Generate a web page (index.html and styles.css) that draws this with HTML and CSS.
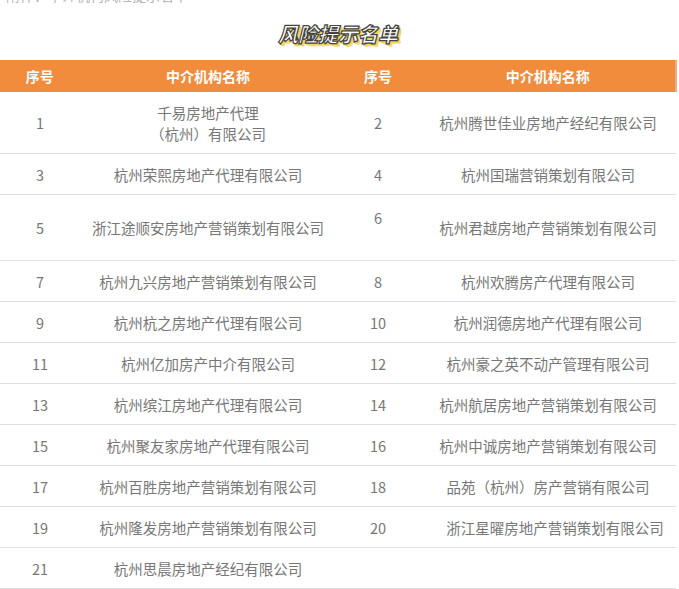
FILE: index.html
```html
<!DOCTYPE html>
<html lang="zh">
<head>
<meta charset="utf-8">
<link rel="stylesheet" href="styles.css">
</head>
<body>
<div class="page">
  <div class="cut"><span class="cut-text">附件：中介机构风险提示名单</span></div>
  <h1 class="title">风险提示名单</h1>
  <table class="list">
    <colgroup>
      <col class="c-no"><col class="c-name"><col class="c-no2"><col class="c-name2">
    </colgroup>
    <thead>
      <tr><th>序号</th><th>中介机构名称</th><th>序号</th><th>中介机构名称</th></tr>
    </thead>
    <tbody>
      <tr class="r61"><td>1</td><td>千易房地产代理<br>（杭州）有限公司</td><td>2</td><td>杭州腾世佳业房地产经纪有限公司</td></tr>
      <tr><td>3</td><td>杭州荣熙房地产代理有限公司</td><td>4</td><td>杭州国瑞营销策划有限公司</td></tr>
      <tr class="r66"><td>5</td><td>浙江途顺安房地产营销策划有限公司</td><td class="up">6<br>&nbsp;</td><td>杭州君越房地产营销策划有限公司</td></tr>
      <tr><td>7</td><td>杭州九兴房地产营销策划有限公司</td><td>8</td><td>杭州欢腾房产代理有限公司</td></tr>
      <tr><td>9</td><td>杭州杭之房地产代理有限公司</td><td>10</td><td>杭州润德房地产代理有限公司</td></tr>
      <tr><td>11</td><td>杭州亿加房产中介有限公司</td><td>12</td><td>杭州豪之英不动产管理有限公司</td></tr>
      <tr><td>13</td><td>杭州缤江房地产代理有限公司</td><td>14</td><td>杭州航居房地产营销策划有限公司</td></tr>
      <tr><td>15</td><td>杭州聚友家房地产代理有限公司</td><td>16</td><td>杭州中诚房地产营销策划有限公司</td></tr>
      <tr><td>17</td><td>杭州百胜房地产营销策划有限公司</td><td>18</td><td>品苑（杭州）房产营销有限公司</td></tr>
      <tr><td>19</td><td>杭州隆发房地产营销策划有限公司</td><td>20</td><td class="wide">浙江星曜房地产营销策划有限公司</td></tr>
      <tr><td>21</td><td>杭州思晨房地产经纪有限公司</td><td></td><td></td></tr>
    </tbody>
  </table>
</div>
</body>
</html>
```
FILE: styles.css
```css
html, body {
  margin: 0;
  padding: 0;
  background: #fff;
}
body {
  font-family: "Microsoft YaHei", "Noto Sans CJK SC", sans-serif;
  color: #666;
  overflow: hidden;
}
.page {
  width: 679px;
}
.cut {
  height: 5px;
  overflow: hidden;
  padding-left: 6px;
}
.cut-text {
  display: block;
  margin-top: -13px;
  font-size: 14px;
  line-height: 16px;
  color: #b5b5b5;
}
.title {
  margin: 0;
  height: 55px;
  line-height: 58px;
  text-align: center;
  padding-right: 3px;
  font-size: 20px;
  font-weight: 900;
  font-style: italic;
  color: #fff;
  -webkit-text-stroke: 1.2px #444;
  text-shadow: 2px 2px 0 #f2d25a, 1px 2px 0 #f2d25a, 2px 1px 0 #e8c23a, 3px 3px 0 #f5e08a;
}
.list {
  width: 676px;
  border-collapse: collapse;
  table-layout: fixed;
}
.c-no { width: 80px; }
.c-name { width: 256px; }
.c-no2 { width: 84px; }
.c-name2 { width: 256px; }
.list th {
  background: #f08c3c;
  color: #fff;
  font-size: 14px;
  font-weight: 700;
  height: 32px;
  padding: 0;
  text-align: center;
  border-right: 1px solid #f08c3c;
}
.list th:last-child {
  border-right: 2px solid #e9b088;
}
.list td {
  font-size: 14.5px;
  line-height: 21px;
  height: 40px;
  padding: 0;
  text-align: center;
  white-space: nowrap;
  border-bottom: 1px solid #dedede;
  color: #777;
}
.list td.wide {
  padding-left: 14px;
}
.list tr.r61 td { height: 61px; }
.list tr.r66 td { height: 65px; }
.list td.up {
  padding-bottom: 0;
}
```
